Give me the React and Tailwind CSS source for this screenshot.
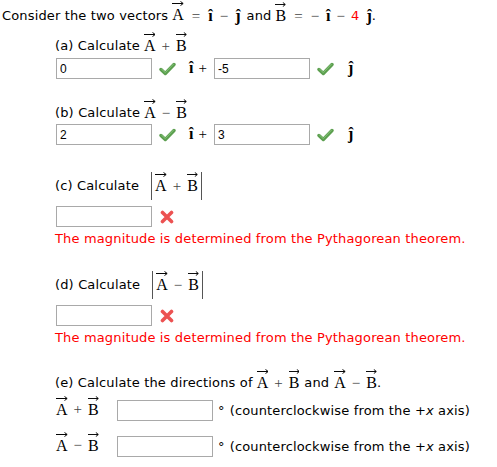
import React from "react";

const serif = "font-['Liberation_Serif','Times_New_Roman',serif]";

const Vec = ({ c }) => (
  <span className={`relative inline-block ${serif} text-[16px] leading-none tracking-normal`}>
    {c}
    <svg
      className="absolute left-0 top-[-6px] w-full h-[5px]"
      viewBox="0 0 12 5"
      preserveAspectRatio="none"
    >
      <path d="M0 2.5H11.3M8.8 0.4L11.6 2.5L8.8 4.6" stroke="black" fill="none" strokeWidth="1" />
    </svg>
  </span>
);

const Unit = ({ c }) => (
  <span className={`${serif} text-[16px] leading-none font-bold tracking-normal`}>{c}</span>
);

const Op = ({ c, cls = "" }) => (
  <span className={`${serif} text-[15px] leading-none text-[#444] tracking-normal ${cls}`}>{c}</span>
);

const Check = () => (
  <svg width="17" height="14" viewBox="0 0 17 14" className="shrink-0">
    <path d="M2 7.5L6.3 11.5L15 2.5" stroke="#5c9f4f" strokeWidth="3.4" fill="none" strokeLinecap="round" strokeLinejoin="round" />
    <path d="M2.6 7.2L6.3 10.6L14.4 2.2" stroke="#86c47a" strokeWidth="1" fill="none" strokeLinecap="round" />
  </svg>
);

const Cross = () => (
  <svg width="14" height="14" viewBox="0 0 14 14" className="shrink-0">
    <path d="M2.5 2.5L11.5 11.5M11.5 2.5L2.5 11.5" stroke="#ec5252" strokeWidth="3.6" strokeLinecap="round" />
  </svg>
);

const Box = ({ value = "" }) => (
  <input
    readOnly
    value={value}
    className="w-[96px] h-[21px] border border-[#a9a9a9] bg-white pl-[3px] text-[12px] tracking-normal font-['Liberation_Sans',Arial,sans-serif] text-black outline-none"
  />
);

const Sum = ({ op }) => (
  <span className="inline-flex items-center">
    <Vec c="A" />
    <Op c={op} cls="mx-[6px]" />
    <Vec c="B" />
  </span>
);

const Abs = ({ op }) => (
  <span className="inline-flex items-center h-[28px] border-l border-r border-[#555] px-[3px]">
    <Sum op={op} />
  </span>
);

const Red = () => (
  <div className="mt-[4px] h-[16px] flex items-center pl-[55px] text-[#ff0000]">
    The magnitude is determined from the Pythagorean theorem.
  </div>
);

export default function App() {
  return (
    <div className="w-[497px] h-[467px] bg-white text-black text-[13px] tracking-[0.15px] font-['DejaVu_Sans',Verdana,sans-serif] overflow-hidden">
      <div className="pt-[4px] h-[28px] flex items-center pl-[2px] whitespace-nowrap">
        <span>Consider the two vectors</span>
        <span className="ml-[4px]"><Vec c="A" /></span>
        <Op c="=" cls="mx-[8px]" />
        <Unit c="î" />
        <Op c="−" cls="mx-[7px]" />
        <Unit c="ĵ" />
        <span className="ml-[6px] mr-[4px]">and</span>
        <Vec c="B" />
        <Op c="=" cls="mx-[8px]" />
        <Op c="−" cls="mr-[7px]" />
        <Unit c="î" />
        <Op c="−" cls="mx-[6px]" />
        <span className="text-[#ff0000] mr-[7px]">4</span>
        <Unit c="ĵ" />
        <span>.</span>
      </div>

      <div className="mt-[8px] h-[20px] flex items-center pl-[55px]">
        <span className="mr-[4px]">(a) Calculate</span>
        <Sum op="+" />
      </div>
      <div className="mt-[2px] flex items-center pl-[56px]">
        <Box value="0" />
        <span className="ml-[7px]"><Check /></span>
        <span className="ml-[13px]"><Unit c="î" /></span>
        <Op c="+" cls="ml-[5px] text-black" />
        <span className="ml-[7px]"><Box value="-5" /></span>
        <span className="ml-[7px]"><Check /></span>
        <span className="ml-[14px]"><Unit c="ĵ" /></span>
      </div>

      <div className="mt-[24px] h-[20px] flex items-center pl-[55px]">
        <span className="mr-[4px]">(b) Calculate</span>
        <Sum op="−" />
      </div>
      <div className="mt-[1px] flex items-center pl-[56px]">
        <Box value="2" />
        <span className="ml-[7px]"><Check /></span>
        <span className="ml-[13px]"><Unit c="î" /></span>
        <Op c="+" cls="ml-[5px] text-black" />
        <span className="ml-[7px]"><Box value="3" /></span>
        <span className="ml-[7px]"><Check /></span>
        <span className="ml-[14px]"><Unit c="ĵ" /></span>
      </div>

      <div className="mt-[27px] h-[28px] flex items-center pl-[55px]">
        <span className="mr-[12px]">(c) Calculate</span>
        <Abs op="+" />
      </div>
      <div className="mt-[6px] flex items-center pl-[56px]">
        <Box />
        <span className="ml-[8px]"><Cross /></span>
      </div>
      <Red />

      <div className="mt-[24px] h-[28px] flex items-center pl-[55px]">
        <span className="mr-[12px]">(d) Calculate</span>
        <Abs op="−" />
      </div>
      <div className="mt-[6px] flex items-center pl-[56px]">
        <Box />
        <span className="ml-[8px]"><Cross /></span>
      </div>
      <Red />

      <div className="mt-[27px] h-[20px] flex items-center pl-[55px] whitespace-nowrap">
        <span className="mr-[4px]">(e) Calculate the directions of</span>
        <Sum op="+" />
        <span className="mx-[5px]">and</span>
        <Sum op="−" />
        <span>.</span>
      </div>
      <div className="mt-[7px] flex items-center pl-[56px] whitespace-nowrap">
        <span className="w-[61px]"><Sum op="+" /></span>
        <Box />
        <span className="ml-[5px]">°</span>
        <span className="ml-[5px]">(counterclockwise from the +<i>x</i> axis)</span>
      </div>
      <div className="mt-[15px] flex items-center pl-[56px] whitespace-nowrap">
        <span className="w-[61px]"><Sum op="−" /></span>
        <Box />
        <span className="ml-[5px]">°</span>
        <span className="ml-[5px]">(counterclockwise from the +<i>x</i> axis)</span>
      </div>
    </div>
  );
}
